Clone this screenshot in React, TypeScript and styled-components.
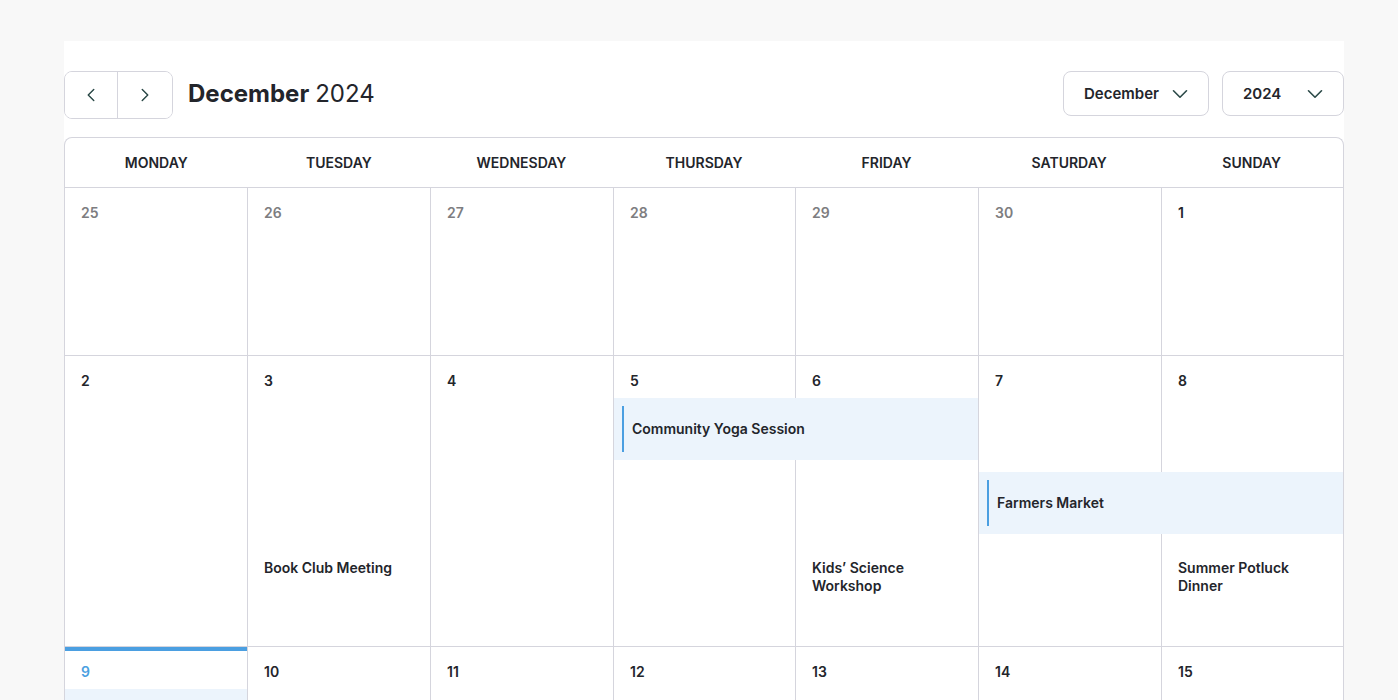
import { FC } from "react";
import styled, { createGlobalStyle } from "styled-components";
import { ChevronLeft, ChevronRight, ChevronDown } from "lucide-react";

const GlobalStyle = createGlobalStyle`
  body {
    margin: 0;
    background: #f8f8f8;
    font-family: Inter, "Noto Sans", sans-serif;
    color: #23252b;
  }
`;

interface IEvent {
  title: string;
  start: number; // column, 1..7
  span: number;
  slot: number; // 1..3
  plain?: boolean;
}

interface IDay {
  num: number;
  muted?: boolean;
  today?: boolean;
}

interface IWeek {
  days: IDay[];
  events: IEvent[];
  minHeight: number;
}

const dayNames = ["Monday", "Tuesday", "Wednesday", "Thursday", "Friday", "Saturday", "Sunday"];

// column widths so the grid lines land where the design has them
const columns = "182px 182px 182px 181px 182px 182px 181px";

const weeks: IWeek[] = [
  {
    days: [
      { num: 25, muted: true },
      { num: 26, muted: true },
      { num: 27, muted: true },
      { num: 28, muted: true },
      { num: 29, muted: true },
      { num: 30, muted: true },
      { num: 1 },
    ],
    events: [],
    minHeight: 167,
  },
  {
    days: [2, 3, 4, 5, 6, 7, 8].map((n) => ({ num: n })),
    events: [
      { title: "Community Yoga Session", start: 4, span: 2, slot: 1 },
      { title: "Farmers Market", start: 6, span: 2, slot: 2 },
      { title: "Book Club Meeting", start: 2, span: 1, slot: 3, plain: true },
      { title: "Kids’ Science Workshop", start: 5, span: 1, slot: 3, plain: true },
      { title: "Summer Potluck Dinner", start: 7, span: 1, slot: 3, plain: true },
    ],
    minHeight: 290,
  },
  {
    days: [
      { num: 9, today: true },
      { num: 10 },
      { num: 11 },
      { num: 12 },
      { num: 13 },
      { num: 14 },
      { num: 15 },
    ],
    // event of the 9th starts below the fold, only its tint shows
    events: [{ title: "", start: 1, span: 1, slot: 1 }],
    minHeight: 167,
  },
];

const App: FC = () => {
  return (
    <>
      <GlobalStyle />
      <Panel>
        <Toolbar>
          <NavGroup>
            <NavButton $width={52} aria-label="Previous month">
              <ChevronLeft size={22} strokeWidth={1.6} />
            </NavButton>
            <NavButton $width={55} aria-label="Next month">
              <ChevronRight size={22} strokeWidth={1.6} />
            </NavButton>
          </NavGroup>
          <Title>
            <strong>December</strong> 2024
          </Title>
          <Spacer />
          <Select $width={146}>
            December
            <ChevronDown size={26} strokeWidth={1.5} />
          </Select>
          <Select $width={122}>
            2024
            <ChevronDown size={26} strokeWidth={1.5} />
          </Select>
        </Toolbar>

        <Calendar>
          <HeaderRow>
            {dayNames.map((d) => (
              <HeaderCell key={d}>{d}</HeaderCell>
            ))}
          </HeaderRow>

          {weeks.map((week, wi) => (
            <Week key={wi} $minHeight={week.minHeight}>
              {week.days.map((day, i) => (
                <DayCell key={"c" + i} $col={i + 1} $today={day.today} />
              ))}
              {week.days.map((day, i) => (
                <DayNumber key={"n" + i} $col={i + 1} $muted={day.muted} $today={day.today}>
                  {day.num}
                </DayNumber>
              ))}
              {week.events.map((ev, ei) =>
                ev.plain ? (
                  <PlainEvent key={ei} $col={ev.start} $span={ev.span} $slot={ev.slot}>
                    {ev.title}
                  </PlainEvent>
                ) : (
                  <EventBar key={ei} $col={ev.start} $span={ev.span} $slot={ev.slot}>
                    {ev.title && <EventLabel>{ev.title}</EventLabel>}
                  </EventBar>
                )
              )}
            </Week>
          ))}
        </Calendar>
      </Panel>
    </>
  );
};

const Panel = styled.div`
  width: 1280px;
  margin: 41px 0 0 64px;
  padding-top: 30px;
  background: #ffffff;
`;

const Toolbar = styled.div`
  display: flex;
  align-items: flex-start;
  gap: 13px;
  margin-bottom: 18px;
`;

const NavGroup = styled.div`
  display: flex;
  height: 48px;
  border: 1px solid #d5d5dd;
  border-radius: 8px;
  overflow: hidden;
  box-sizing: border-box;
`;

const NavButton = styled.button<{ $width: number }>`
  width: ${(p) => p.$width}px;
  height: 100%;
  display: flex;
  align-items: center;
  justify-content: center;
  background: #fff;
  border: none;
  padding: 0;
  color: #2c4a48;
  cursor: pointer;

  & + & {
    border-left: 1px solid #d5d5dd;
  }
`;

const Title = styled.h1`
  margin: 0 0 0 2px;
  height: 45px;
  display: flex;
  align-items: center;
  gap: 6px;
  font-size: 24px;
  font-weight: 400;
  color: #23252b;

  strong {
    font-weight: 700;
  }
`;

const Spacer = styled.div`
  flex: 1;
`;

const Select = styled.div<{ $width: number }>`
  width: ${(p) => p.$width}px;
  height: 45px;
  box-sizing: border-box;
  display: flex;
  align-items: center;
  justify-content: space-between;
  padding: 0 15px 0 20px;
  border: 1px solid #d5d5dd;
  border-radius: 8px;
  font-size: 15px;
  font-weight: 600;
  color: #23252b;

  svg {
    color: #2c4a48;
  }
`;

const Calendar = styled.div`
  border: 1px solid #d5d5dd;
  border-bottom: none;
  border-radius: 8px 8px 0 0;
  overflow: hidden;
`;

const HeaderRow = styled.div`
  display: grid;
  grid-template-columns: repeat(7, 1fr);
  height: 49px;
`;

const HeaderCell = styled.div`
  display: flex;
  align-items: center;
  justify-content: center;
  font-size: 14px;
  font-weight: 600;
  text-transform: uppercase;
  color: #23252b;
`;

const Week = styled.div<{ $minHeight: number }>`
  display: grid;
  grid-template-columns: ${columns};
  grid-template-rows: auto auto auto auto 1fr;
  column-gap: 1px;
  background: #d5d5dd;
  border-top: 1px solid #d5d5dd;
  min-height: ${(p) => p.$minHeight}px;
`;

const DayCell = styled.div<{ $col: number; $today?: boolean }>`
  grid-column: ${(p) => p.$col};
  grid-row: 1 / -1;
  background: #ffffff;
  box-shadow: ${(p) => (p.$today ? "inset 0 4px 0 #4b9fe1" : "none")};
`;

const DayNumber = styled.div<{ $col: number; $muted?: boolean; $today?: boolean }>`
  grid-column: ${(p) => p.$col};
  grid-row: 1;
  padding: 15px 16px 0;
  font-size: 14px;
  line-height: 20px;
  font-weight: 600;
  color: ${(p) => (p.$today ? "#4b9fe1" : p.$muted ? "#7d7d80" : "#23252b")};
`;

const EventBar = styled.div<{ $col: number; $span: number; $slot: number }>`
  grid-column: ${(p) => p.$col} / span ${(p) => p.$span};
  grid-row: ${(p) => p.$slot + 1};
  margin-top: ${(p) => (p.$slot === 1 ? 7 : 12)}px;
  min-height: 62px;
  box-sizing: border-box;
  padding: 8px;
  background: #ecf4fc;
`;

const EventLabel = styled.div`
  border-left: 2px solid #4b9fe1;
  padding: 14px 8px;
  font-size: 14px;
  line-height: 18px;
  font-weight: 600;
  color: #23252b;
`;

const PlainEvent = styled.div<{ $col: number; $span: number; $slot: number }>`
  grid-column: ${(p) => p.$col} / span ${(p) => p.$span};
  grid-row: ${(p) => p.$slot + 1};
  margin-top: 25px;
  padding: 0 16px;
  font-size: 14px;
  line-height: 18px;
  font-weight: 600;
  color: #23252b;
`;

export default App;
